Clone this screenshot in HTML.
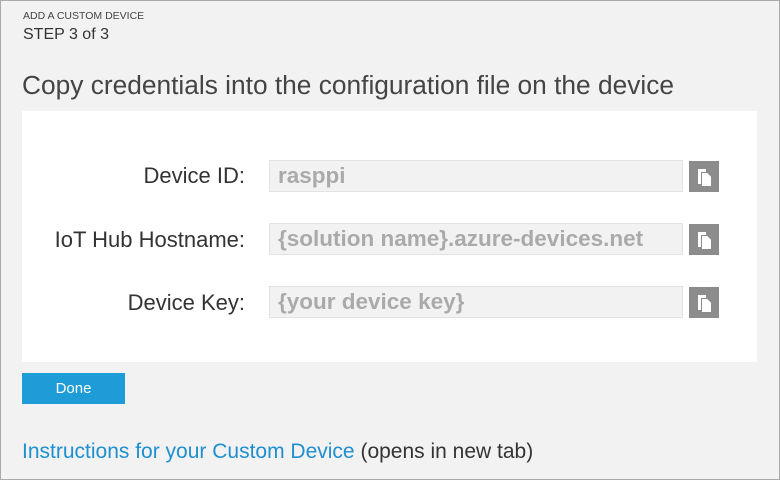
<!DOCTYPE html>
<html><head><style>
body{margin:0;width:780px;height:480px;background:#f2f2f2;font-family:"Liberation Sans",sans-serif;position:relative;overflow:hidden}
.frame{position:absolute;left:0;top:0;width:778px;height:478px;border:1px solid #aaa}
.a{position:absolute;white-space:nowrap;color:#333}
.panel{position:absolute;left:22px;top:111px;width:735px;height:251px;background:#fff}
.inp{position:absolute;left:269px;background:#f2f2f2;border:1px solid #e2e2e2;color:#aaa;font-weight:bold;font-size:22.5px;line-height:30px;padding-left:8px;box-sizing:border-box;width:414px;height:32px;white-space:nowrap}
.btn{position:absolute;left:689px;width:30px;height:31px;background:#8c8c8c}
.lbl{position:absolute;right:535px;font-size:22px;color:#333;white-space:nowrap}
</style></head><body>
<div class="frame"></div>
<div class="a" style="left:23px;top:10px;font-size:10.5px;color:#444">ADD A CUSTOM DEVICE</div>
<div class="a" style="left:23px;top:26px;font-size:16px">STEP 3 of 3</div>
<div class="a" style="left:22px;top:70px;font-size:26.3px;color:#444">Copy credentials into the configuration file on the device</div>
<div class="panel"></div>
<div class="lbl" style="top:163px">Device ID:</div>
<div class="lbl" style="top:227px">IoT Hub Hostname:</div>
<div class="lbl" style="top:290px">Device Key:</div>
<div class="inp" style="top:160px">rasppi</div>
<div class="inp" style="top:223px">{solution name}.azure-devices.net</div>
<div class="inp" style="top:286px">{your device key}</div>
<svg class="btn" style="top:161px" viewBox="0 0 30 31"><path d="M9 8h8v4h-8z M9 8h3v15h-3z" fill="#fff"/><path d="M12.5 11.5h6l4 4v10h-10z" fill="#fff" stroke="#8c8c8c" stroke-width="1"/></svg>
<svg class="btn" style="top:224px" viewBox="0 0 30 31"><path d="M9 8h8v4h-8z M9 8h3v15h-3z" fill="#fff"/><path d="M12.5 11.5h6l4 4v10h-10z" fill="#fff" stroke="#8c8c8c" stroke-width="1"/></svg>
<svg class="btn" style="top:287px" viewBox="0 0 30 31"><path d="M9 8h8v4h-8z M9 8h3v15h-3z" fill="#fff"/><path d="M12.5 11.5h6l4 4v10h-10z" fill="#fff" stroke="#8c8c8c" stroke-width="1"/></svg>
<div style="position:absolute;left:22px;top:373px;width:103px;height:31px;background:#1e9cd8;color:#fff;font-size:15px;line-height:31px;text-align:center">Done</div>
<div class="a" style="left:22px;top:440px;font-size:21px"><span style="color:#1e90d0">Instructions for your Custom Device</span> (opens in new tab)</div>
</body></html>
